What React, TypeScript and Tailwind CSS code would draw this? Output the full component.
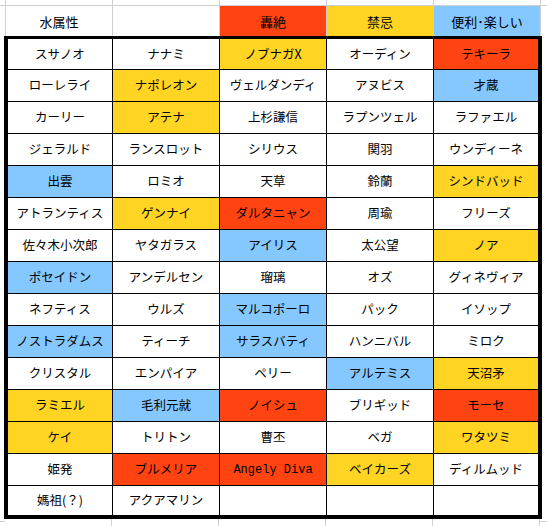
type Cell = [string, "" | "r" | "y" | "b"];

const bg: Record<string, string> = {
  "": "bg-white",
  r: "bg-[#ff4411]",
  y: "bg-[#ffd422]",
  b: "bg-[#85c8ff]",
};

const header: Cell[] = [
  ["水属性", ""],
  ["", ""],
  ["轟絶", "r"],
  ["禁忌", "y"],
  ["便利･楽しい", "b"],
];

const rows: Cell[][] = [
  [["スサノオ", ""], ["ナナミ", ""], ["ノブナガX", "y"], ["オーディン", ""], ["テキーラ", "r"]],
  [["ローレライ", ""], ["ナポレオン", "y"], ["ヴェルダンディ", ""], ["アヌビス", ""], ["才蔵", "b"]],
  [["カーリー", ""], ["アテナ", "y"], ["上杉謙信", ""], ["ラプンツェル", ""], ["ラファエル", ""]],
  [["ジェラルド", ""], ["ランスロット", ""], ["シリウス", ""], ["関羽", ""], ["ウンディーネ", ""]],
  [["出雲", "b"], ["ロミオ", ""], ["天草", ""], ["鈴蘭", ""], ["シンドバッド", "y"]],
  [["アトランティス", ""], ["ゲンナイ", "y"], ["ダルタニャン", "r"], ["周瑜", ""], ["フリーズ", ""]],
  [["佐々木小次郎", ""], ["ヤタガラス", ""], ["アイリス", "b"], ["太公望", ""], ["ノア", "y"]],
  [["ポセイドン", "b"], ["アンデルセン", ""], ["瑠璃", ""], ["オズ", ""], ["グィネヴィア", ""]],
  [["ネフティス", ""], ["ウルズ", ""], ["マルコポーロ", "b"], ["パック", ""], ["イソップ", ""]],
  [["ノストラダムス", "b"], ["ティーチ", ""], ["サラスバティ", "b"], ["ハンニバル", ""], ["ミロク", ""]],
  [["クリスタル", ""], ["エンパイア", ""], ["ペリー", ""], ["アルテミス", "b"], ["天沼矛", "y"]],
  [["ラミエル", "y"], ["毛利元就", "b"], ["ノイシュ", "r"], ["ブリギッド", ""], ["モーセ", "r"]],
  [["ケイ", "y"], ["トリトン", ""], ["曹丕", ""], ["ベガ", ""], ["ワタツミ", "y"]],
  [["姫発", ""], ["ブルメリア", "r"], ["Angely Diva", "r"], ["ベイカーズ", "y"], ["ディルムッド", ""]],
  [["媽祖(？)", ""], ["アクアマリン", ""], ["", ""], ["", ""], ["", ""]],
];

export default function App() {
  return (
    <div className="w-[547px] h-[526px] overflow-hidden bg-white text-black text-[12.5px] leading-none font-['Noto_Sans_CJK_JP',sans-serif]">
      {/* gridlines above the sheet */}
      <div className="h-[6px] border-b border-[#d0d0d0] pl-[5px]">
        <div className="grid h-full w-fit grid-cols-[repeat(5,106px)] gap-x-px bg-[#d0d0d0] border-x border-[#d0d0d0]">
          {[0, 1, 2, 3, 4].map((i) => (
            <div key={i} className="bg-white" />
          ))}
        </div>
      </div>

      {/* header row */}
      <div className="pl-[5px]">
        <div className="grid h-[30px] w-fit grid-cols-[repeat(5,106px)] gap-x-px bg-[#d0d0d0] border-x border-[#d0d0d0] text-[13px]">
          {header.map(([t, c], i) => (
            <div key={i} className={`flex items-center justify-center ${bg[c]}`}>
              {t}
            </div>
          ))}
        </div>
      </div>

      {/* table */}
      <div className="pl-[4px]">
        <div className="grid w-fit grid-cols-[104px_106px_106px_106px_104px] grid-rows-[30px_repeat(13,31px)_29px] gap-px bg-black border-black border-x-4 border-t-[3px] border-b-4">
          {rows.flat().map(([t, c], i) => (
            <div
              key={i}
              className={`flex items-center justify-center whitespace-nowrap ${bg[c]} ${
                t === "Angely Diva" ? "font-['Liberation_Mono',monospace] text-[12px]" : ""
              }`}
            >
              {t}
            </div>
          ))}
        </div>
      </div>

      {/* gridlines below the sheet */}
      <div className="flex h-[7px]">
        <div className="w-[5px] mt-[2px] border-t border-[#d0d0d0]" />
        <div className="grid h-full w-fit grid-cols-[repeat(5,106px)] gap-x-px bg-[#d0d0d0] border-r border-[#d0d0d0]">
          {[0, 1, 2, 3, 4].map((i) => (
            <div key={i} className="bg-white" />
          ))}
        </div>
        <div className="flex-1 mt-[2px] border-t border-[#d0d0d0]" />
      </div>
    </div>
  );
}
